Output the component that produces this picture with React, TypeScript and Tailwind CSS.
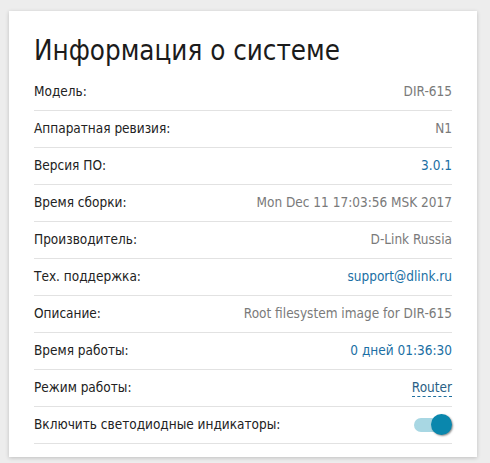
import React from "react";

type Row = {
  label: string;
  value?: string;
  tone?: "muted" | "link";
  kind?: "text" | "select" | "switch";
};

const rows: Row[] = [
  { label: "Модель:", value: "DIR-615", tone: "muted" },
  { label: "Аппаратная ревизия:", value: "N1", tone: "muted" },
  { label: "Версия ПО:", value: "3.0.1", tone: "link" },
  { label: "Время сборки:", value: "Mon Dec 11 17:03:56 MSK 2017", tone: "muted" },
  { label: "Производитель:", value: "D-Link Russia", tone: "muted" },
  { label: "Тех. поддержка:", value: "support@dlink.ru", tone: "link" },
  { label: "Описание:", value: "Root filesystem image for DIR-615", tone: "muted" },
  { label: "Время работы:", value: "0 дней 01:36:30", tone: "link" },
  { label: "Режим работы:", value: "Router", kind: "select" },
  { label: "Включить светодиодные индикаторы:", kind: "switch" },
];

function LedSwitch({ on }: { on: boolean }) {
  return (
    <div className="relative h-[22px] w-[38px]">
      <div className="absolute left-0 top-[4px] h-[14px] w-[34px] rounded-full bg-[#a8d7e3]" />
      <div
        className={
          on
            ? "absolute right-0 top-0 h-[21px] w-[21px] rounded-full bg-[#0a87ad] shadow-[1px_1px_2px_rgba(0,0,0,0.45)]"
            : "absolute left-0 top-0 h-[21px] w-[21px] rounded-full bg-[#f5f5f5] shadow-[1px_1px_2px_rgba(0,0,0,0.45)]"
        }
      />
    </div>
  );
}

function InfoRow({ row }: { row: Row }) {
  return (
    <div className="flex h-[37px] items-center justify-between border-b border-[#e2e2e2] pb-[1px]">
      <span className="text-[#222]">{row.label}</span>
      {row.kind === "switch" ? (
        <LedSwitch on />
      ) : row.kind === "select" ? (
        <span className="border-b border-dashed border-[#1f6f9f] leading-[17px] text-[#2a5f86]">
          {row.value}
        </span>
      ) : (
        <span className={row.tone === "link" ? "text-[#1b6fa4]" : "text-[#7a7a7a]"}>
          {row.value}
        </span>
      )}
    </div>
  );
}

export default function App() {
  return (
    <div
      className="min-h-[463px] w-[490px] bg-[#ededed] pl-[9px] pt-[11px] text-[13.5px]"
      style={{ fontFamily: '"DejaVu Sans Condensed", "DejaVu Sans", sans-serif' }}
    >
      <div className="w-[468px] bg-white px-[25px] pb-[13px] pt-[24px] shadow-[0_1px_4px_rgba(0,0,0,0.2)]">
        <h1 className="h-[39px] text-[27.5px] font-normal leading-[31px] text-[#1b1b1b]">
          Информация о системе
        </h1>
        {rows.map((row) => (
          <InfoRow key={row.label} row={row} />
        ))}
      </div>
    </div>
  );
}
